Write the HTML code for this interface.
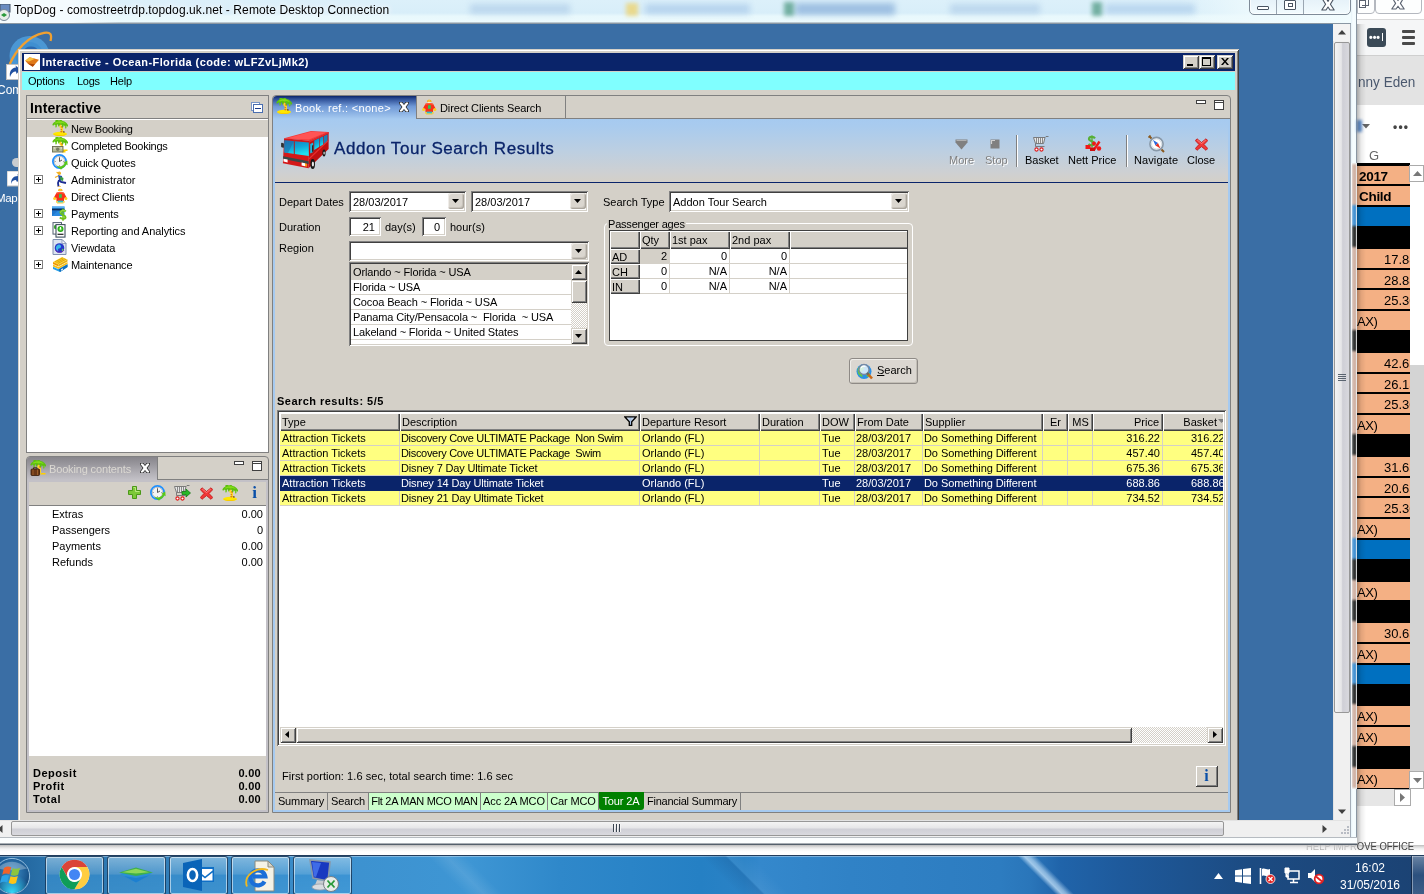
<!DOCTYPE html>
<html lang="en"><head><meta charset="utf-8"><title>TopDog - Remote Desktop Connection</title>
<style>
html,body{margin:0;padding:0;background:#3a6ea5;}
body{width:1424px;height:894px;overflow:hidden;font-family:"Liberation Sans",sans-serif;font-size:11px;color:#000;}
#root{position:relative;width:1424px;height:894px;overflow:hidden;will-change:transform;}
#root div,#root span,#root svg{position:absolute;box-sizing:border-box;}
.t{white-space:pre;line-height:13px;height:13px;}
.r{text-align:right;}
.b{font-weight:bold;}
.face{background:#d4d0c8;}
.sunk{box-shadow:inset 1px 1px #808080,inset -1px -1px #fff,inset 2px 2px #404040,inset -2px -2px #d4d0c8;}
.rais{box-shadow:inset 1px 1px #fff,inset -1px -1px #404040,inset -2px -2px #808080;background:#d4d0c8;}
.rais2{box-shadow:inset 1px 1px #d4d0c8,inset -1px -1px #404040,inset 2px 2px #fff,inset -2px -2px #808080;background:#d4d0c8;}
.hdr{background:#d4d0c8;box-shadow:inset 1px 1px #fff,inset -1px -1px #404040,inset -2px -2px #808080;}
.w{color:#fff;}
</style></head><body><div id="root">
<!-- RDP title bar -->
<div style="left:0px;top:0px;width:1357px;height:24px;background:linear-gradient(to bottom,#dcf0fa 0,#d8eef9 13px,#e8f8fc 16px,#ecfafd 22px,#8a97a3 23px);"></div>
<div style="left:0px;top:0px;width:120px;height:23px;background:linear-gradient(to right,#f4fbfe,#f4fbfe 60%,rgba(244,251,254,0));"></div>
<div style="left:1180px;top:0px;width:177px;height:23px;background:linear-gradient(to right,rgba(240,251,254,0),#eefafd 45%,#f2fcfe);"></div>
<div style="left:470px;top:4px;width:100px;height:10px;background:#a9c8e6;filter:blur(3px);opacity:.6"></div>
<div style="left:645px;top:4px;width:105px;height:10px;background:#a4c6e8;filter:blur(3px);opacity:.65"></div>
<div style="left:795px;top:3px;width:100px;height:12px;background:#8fb4dc;filter:blur(3px);opacity:.8"></div>
<div style="left:950px;top:4px;width:90px;height:10px;background:#a9c8e6;filter:blur(3px);opacity:.6"></div>
<div style="left:1105px;top:4px;width:90px;height:10px;background:#a4c6e8;filter:blur(3px);opacity:.6"></div>
<div style="left:626px;top:3px;width:12px;height:13px;background:#f0d060;filter:blur(2px);opacity:.7"></div>
<div style="left:784px;top:2px;width:10px;height:14px;background:#5aa08c;filter:blur(2px);opacity:.8"></div>
<div style="left:1092px;top:2px;width:10px;height:14px;background:#5aa08c;filter:blur(2px);opacity:.8"></div>
<span class="t" style="left:14px;top:2px;font-size:12px;line-height:16px;height:16px;letter-spacing:0.1px;text-shadow:0 0 6px #fff,0 0 6px #fff;">TopDog - comostreetrdp.topdog.uk.net - Remote Desktop Connection</span>
<svg style="left:-3px;top:4px" width="16" height="18" viewBox="0 0 16 18"><rect x="3" y="0" width="10" height="8" fill="#6a8cc0" stroke="#456" stroke-width="1"/><circle cx="7" cy="11" r="5.5" fill="#e8eee8" stroke="#789" stroke-width="1"/><path d="M4 11l3-2v4zM10 11l-3-2v4z" fill="#2a9a3a"/></svg>
<div style="left:1249px;top:-4px;width:102px;height:19px;border:1px solid #7f8b98;border-radius:0 0 5px 5px;background:linear-gradient(to bottom,#e4f0f8,#f2fbfe);box-shadow:inset 0 0 0 1px rgba(255,255,255,.7);"></div>
<div style="left:1276px;top:0px;width:1px;height:14px;background:#9aa6b2"></div>
<div style="left:1303px;top:0px;width:1px;height:14px;background:#9aa6b2"></div>
<div style="left:1257px;top:6px;width:12px;height:4px;border:1px solid #4a5462;background:#fff;border-radius:1px"></div>
<div style="left:1284px;top:0px;width:12px;height:10px;border:1px solid #4a5462;background:#fff;border-radius:1px"></div>
<div style="left:1288px;top:3px;width:5px;height:4px;border:1px solid #4a5462;"></div>
<svg style="left:1321px;top:0px" width="14" height="11" viewBox="0 0 14 11"><path d="M.8 -2 L4.600 4.200 .8 10 h4.200 L7 7 9 10 h4.200 L9.400 4.200 13.200 -2 h-4.200 L7 1.400 5 -2z" fill="#fff" stroke="#4a5462" stroke-width="1.100" stroke-linejoin="round"/></svg>
<!-- RDP scrollbars -->
<div style="left:1333px;top:24px;width:18px;height:796px;background:#f0f0f0;border-left:1px solid #e3e3e3"></div>
<div style="left:1333px;top:24px;width:18px;height:17px;background:#f3f3f3"></div>
<svg style="left:1338px;top:29px" width="8" height="6" viewBox="0 0 8 6"><path d="M0 5.5 L4 1 8 5.5z" fill="#404040"/></svg>
<div style="left:1334px;top:42px;width:16px;height:671px;border:1px solid #979797;border-radius:2px;background:linear-gradient(to right,#f4f4f4,#e6e6e8 45%,#cfcfd6 55%,#d9d9de);"></div>
<svg style="left:1338px;top:373px" width="8" height="9" viewBox="0 0 8 9"><path d="M0 1.5h8M0 3.5h8M0 5.5h8M0 7.5h8" stroke="#5a6470" stroke-width="1"/></svg>
<svg style="left:1338px;top:809px" width="8" height="6" viewBox="0 0 8 6"><path d="M0 .5 L4 5 8 .5z" fill="#404040"/></svg>
<div style="left:0px;top:820px;width:1351px;height:17px;background:#f0f0f0;border-top:1px solid #e3e3e3"></div>
<div style="left:11px;top:821px;width:1213px;height:15px;border:1px solid #979797;border-radius:2px;background:linear-gradient(to bottom,#f4f4f4,#e6e6e8 45%,#cfcfd6 55%,#d9d9de);"></div>
<svg style="left:613px;top:824px" width="9" height="8" viewBox="0 0 9 8"><path d="M.5 0v8M3.5 0v8M6.500 0v8" stroke="#3a4450" stroke-width="1"/><path d="M1.500 0v8M4.500 0v8M7.500 0v8" stroke="#f4f4f4" stroke-width="1"/></svg>
<svg style="left:-3px;top:825px" width="6" height="8" viewBox="0 0 6 8"><path d="M5.5 0 L1 4 5.5 8z" fill="#404040"/></svg>
<svg style="left:1322px;top:825px" width="6" height="8" viewBox="0 0 6 8"><path d="M.5 0 L5 4 .5 8z" fill="#404040"/></svg>
<svg style="left:1338px;top:824px" width="12" height="12" viewBox="0 0 12 12"><path d="M9 2h2v2h-2zM6 5h2v2h-2zM9 5h2v2h-2zM3 8h2v2h-2zM6 8h2v2h-2zM9 8h2v2h-2z" fill="#b8bcc4"/></svg>
<div style="left:1350px;top:24px;width:1px;height:814px;background:#a3adb8"></div>
<div style="left:1351px;top:0px;width:6px;height:845px;background:linear-gradient(to right,#e6f2f8,#f6fdff 40%,#f2fbfe);border-right:1px solid #8a96a2"></div>
<div style="left:0px;top:837px;width:1357px;height:8px;background:linear-gradient(to bottom,#727a84 0,#fafdfe 1px,#fcfefe 6px,#55606c 7px);"></div>
<!-- right window -->
<div style="left:1357px;top:0px;width:67px;height:845px;background:#fff"></div>
<div style="left:1357px;top:-4px;width:18px;height:18px;border:1px solid #b4b8bf;border-radius:0 0 4px 0;background:#fdfefe"></div>
<div style="left:1375px;top:-4px;width:47px;height:18px;border:1px solid #b4b8bf;border-radius:0 0 4px 4px;background:#fdfefe"></div>
<div style="left:1359px;top:0px;width:7px;height:8px;border:1px solid #5a6270;background:#fff"></div>
<div style="left:1362px;top:-2px;width:7px;height:8px;border:1px solid #5a6270;border-left:none"></div>
<svg style="left:1391px;top:0px" width="14" height="10" viewBox="0 0 14 10"><path d="M.8 -3 L4.600 3.400 .8 9 h4.200 L7 6.200 9 9 h4.200 L9.400 3.400 13.200 -3 h-4.200 L7 .6 5 -3z" fill="#fff" stroke="#5a6270" stroke-width="1.100" stroke-linejoin="round"/></svg>
<div style="left:1357px;top:19px;width:67px;height:1px;background:#d9d9d9"></div>
<div style="left:1357px;top:20px;width:67px;height:36px;background:#f5f6f7"></div>
<div style="left:1367px;top:28px;width:19px;height:19px;background:#3b4a57;border-radius:3px"></div>
<span class="t" style="left:1369px;top:30px;color:#fff;font-size:10.5px;line-height:14px;height:14px;letter-spacing:0px;font-weight:bold">•••</span>
<div style="left:1382px;top:33px;width:1px;height:8px;background:#fff"></div>
<div style="left:1402px;top:30px;width:13px;height:3px;background:#4a4a4a;border-radius:1px"></div>
<div style="left:1402px;top:36px;width:13px;height:3px;background:#4a4a4a;border-radius:1px"></div>
<div style="left:1402px;top:42px;width:13px;height:3px;background:#4a4a4a;border-radius:1px"></div>
<div style="left:1357px;top:55px;width:67px;height:1px;background:#cfcfcf"></div>
<div style="left:1357px;top:56px;width:67px;height:49px;background:#e3e3e3"></div>
<span class="t" style="left:1358px;top:72px;font-size:15.5px;line-height:20px;height:20px;color:#4a586e;transform:scaleX(0.875);transform-origin:0 0">nny Eden</span>
<svg style="left:1362px;top:124px" width="8" height="5" viewBox="0 0 8 5"><path d="M0 0h8L4 4.5z" fill="#666"/></svg>
<div style="left:1357px;top:120px;width:5px;height:12px;background:#3a78c8;filter:blur(1.5px);opacity:.8"></div>
<span class="t" style="left:1393px;top:119px;font-size:12px;line-height:16px;height:16px;color:#444;letter-spacing:1.2px;font-weight:bold">•••</span>
<span class="t" style="left:1369px;top:148px;font-size:13px;line-height:15px;height:15px;color:#666">G</span>
<div style="left:1357px;top:163px;width:53px;height:626px;background:#000"></div>
<div style="left:1357px;top:166px;width:53px;height:18px;background:#f4b084;overflow:hidden"><span class="t" style="left:2px;top:3px;font-size:13.5px;font-weight:bold;line-height:16px;height:16px;letter-spacing:-0.3px">2017</span></div>
<div style="left:1357px;top:186px;width:53px;height:19px;background:#f4b084;overflow:hidden"><span class="t" style="left:2px;top:3px;font-size:13.5px;font-weight:bold;line-height:16px;height:16px;letter-spacing:-0.3px">Child</span></div>
<div style="left:1357px;top:207px;width:53px;height:19px;background:#0070c0;overflow:hidden"></div>
<div style="left:1357px;top:228px;width:53px;height:19px;background:#000;overflow:hidden"></div>
<div style="left:1357px;top:249px;width:53px;height:19px;background:#f4b084;overflow:hidden"><span class="t" style="left:27px;top:3px;font-size:13px;line-height:16px;height:16px">17.88</span></div>
<div style="left:1357px;top:270px;width:53px;height:18px;background:#f4b084;overflow:hidden"><span class="t" style="left:27px;top:3px;font-size:13px;line-height:16px;height:16px">28.88</span></div>
<div style="left:1357px;top:290px;width:53px;height:19px;background:#f4b084;overflow:hidden"><span class="t" style="left:27px;top:3px;font-size:13px;line-height:16px;height:16px">25.30</span></div>
<div style="left:1357px;top:311px;width:53px;height:19px;background:#f4b084;overflow:hidden"><span class="t" style="left:0px;top:3px;font-size:13px;line-height:16px;height:16px;letter-spacing:-0.4px">AX)</span></div>
<div style="left:1357px;top:332px;width:53px;height:19px;background:#000;overflow:hidden"></div>
<div style="left:1357px;top:353px;width:53px;height:19px;background:#f4b084;overflow:hidden"><span class="t" style="left:27px;top:3px;font-size:13px;line-height:16px;height:16px">42.63</span></div>
<div style="left:1357px;top:374px;width:53px;height:18px;background:#f4b084;overflow:hidden"><span class="t" style="left:27px;top:3px;font-size:13px;line-height:16px;height:16px">26.13</span></div>
<div style="left:1357px;top:394px;width:53px;height:19px;background:#f4b084;overflow:hidden"><span class="t" style="left:27px;top:3px;font-size:13px;line-height:16px;height:16px">25.30</span></div>
<div style="left:1357px;top:415px;width:53px;height:19px;background:#f4b084;overflow:hidden"><span class="t" style="left:0px;top:3px;font-size:13px;line-height:16px;height:16px;letter-spacing:-0.4px">AX)</span></div>
<div style="left:1357px;top:436px;width:53px;height:19px;background:#000;overflow:hidden"></div>
<div style="left:1357px;top:457px;width:53px;height:19px;background:#f4b084;overflow:hidden"><span class="t" style="left:27px;top:3px;font-size:13px;line-height:16px;height:16px">31.63</span></div>
<div style="left:1357px;top:478px;width:53px;height:18px;background:#f4b084;overflow:hidden"><span class="t" style="left:27px;top:3px;font-size:13px;line-height:16px;height:16px">20.63</span></div>
<div style="left:1357px;top:498px;width:53px;height:19px;background:#f4b084;overflow:hidden"><span class="t" style="left:27px;top:3px;font-size:13px;line-height:16px;height:16px">25.30</span></div>
<div style="left:1357px;top:519px;width:53px;height:19px;background:#f4b084;overflow:hidden"><span class="t" style="left:0px;top:3px;font-size:13px;line-height:16px;height:16px;letter-spacing:-0.4px">AX)</span></div>
<div style="left:1357px;top:540px;width:53px;height:19px;background:#0070c0;overflow:hidden"></div>
<div style="left:1357px;top:561px;width:53px;height:19px;background:#000;overflow:hidden"></div>
<div style="left:1357px;top:582px;width:53px;height:18px;background:#f4b084;overflow:hidden"><span class="t" style="left:0px;top:3px;font-size:13px;line-height:16px;height:16px;letter-spacing:-0.4px">AX)</span></div>
<div style="left:1357px;top:602px;width:53px;height:19px;background:#000;overflow:hidden"></div>
<div style="left:1357px;top:623px;width:53px;height:19px;background:#f4b084;overflow:hidden"><span class="t" style="left:27px;top:3px;font-size:13px;line-height:16px;height:16px">30.63</span></div>
<div style="left:1357px;top:644px;width:53px;height:19px;background:#f4b084;overflow:hidden"><span class="t" style="left:0px;top:3px;font-size:13px;line-height:16px;height:16px;letter-spacing:-0.4px">AX)</span></div>
<div style="left:1357px;top:665px;width:53px;height:19px;background:#0070c0;overflow:hidden"></div>
<div style="left:1357px;top:686px;width:53px;height:18px;background:#000;overflow:hidden"></div>
<div style="left:1357px;top:706px;width:53px;height:19px;background:#f4b084;overflow:hidden"><span class="t" style="left:0px;top:3px;font-size:13px;line-height:16px;height:16px;letter-spacing:-0.4px">AX)</span></div>
<div style="left:1357px;top:727px;width:53px;height:19px;background:#f4b084;overflow:hidden"><span class="t" style="left:0px;top:3px;font-size:13px;line-height:16px;height:16px;letter-spacing:-0.4px">AX)</span></div>
<div style="left:1357px;top:748px;width:53px;height:19px;background:#000;overflow:hidden"></div>
<div style="left:1357px;top:769px;width:53px;height:19px;background:#f4b084;overflow:hidden"><span class="t" style="left:0px;top:3px;font-size:13px;line-height:16px;height:16px;letter-spacing:-0.4px">AX)</span></div>
<div style="left:1351px;top:163px;width:6px;height:626px;overflow:hidden"><div style="left:1px;top:0;width:4px;height:626px;filter:blur(1.200px);opacity:.8"><div style="left:0;top:1px;width:5px;height:20px;background:#c8a090"></div><div style="left:0;top:21px;width:5px;height:21px;background:#c8a090"></div><div style="left:0;top:42px;width:5px;height:21px;background:#1a78c8"></div><div style="left:0;top:63px;width:5px;height:21px;background:#000"></div><div style="left:0;top:84px;width:5px;height:21px;background:#c8a090"></div><div style="left:0;top:105px;width:5px;height:20px;background:#c8a090"></div><div style="left:0;top:125px;width:5px;height:21px;background:#c8a090"></div><div style="left:0;top:146px;width:5px;height:21px;background:#c8a090"></div><div style="left:0;top:167px;width:5px;height:21px;background:#000"></div><div style="left:0;top:188px;width:5px;height:21px;background:#c8a090"></div><div style="left:0;top:209px;width:5px;height:20px;background:#c8a090"></div><div style="left:0;top:229px;width:5px;height:21px;background:#c8a090"></div><div style="left:0;top:250px;width:5px;height:21px;background:#c8a090"></div><div style="left:0;top:271px;width:5px;height:21px;background:#000"></div><div style="left:0;top:292px;width:5px;height:21px;background:#c8a090"></div><div style="left:0;top:313px;width:5px;height:20px;background:#c8a090"></div><div style="left:0;top:333px;width:5px;height:21px;background:#c8a090"></div><div style="left:0;top:354px;width:5px;height:21px;background:#c8a090"></div><div style="left:0;top:375px;width:5px;height:21px;background:#1a78c8"></div><div style="left:0;top:396px;width:5px;height:21px;background:#000"></div><div style="left:0;top:417px;width:5px;height:20px;background:#c8a090"></div><div style="left:0;top:437px;width:5px;height:21px;background:#000"></div><div style="left:0;top:458px;width:5px;height:21px;background:#c8a090"></div><div style="left:0;top:479px;width:5px;height:21px;background:#c8a090"></div><div style="left:0;top:500px;width:5px;height:21px;background:#1a78c8"></div><div style="left:0;top:521px;width:5px;height:20px;background:#000"></div><div style="left:0;top:541px;width:5px;height:21px;background:#c8a090"></div><div style="left:0;top:562px;width:5px;height:21px;background:#c8a090"></div><div style="left:0;top:583px;width:5px;height:21px;background:#000"></div><div style="left:0;top:604px;width:5px;height:21px;background:#c8a090"></div></div></div>
<div style="left:1351px;top:163px;width:1px;height:626px;background:rgba(255,255,255,.8)"></div>
<div style="left:1356px;top:163px;width:1px;height:626px;background:rgba(255,255,255,.75)"></div>
<div style="left:1410px;top:165px;width:14px;height:624px;background:#d4d4d4"></div>
<div style="left:1410px;top:165px;width:14px;height:200px;background:#fff"></div>
<div style="left:1409px;top:165px;width:15px;height:17px;background:#fff;border:1px solid #ababab"></div>
<svg style="left:1413px;top:171px" width="9" height="5" viewBox="0 0 9 5"><path d="M0 5L4.5 0 9 5z" fill="#777"/></svg>
<div style="left:1409px;top:771px;width:15px;height:18px;background:#fff;border:1px solid #ababab"></div>
<svg style="left:1413px;top:778px" width="9" height="5" viewBox="0 0 9 5"><path d="M0 0L4.5 5 9 0z" fill="#777"/></svg>
<div style="left:1357px;top:789px;width:67px;height:17px;background:#e6e6e6"></div>
<div style="left:1394px;top:789px;width:17px;height:17px;background:#fff;border:1px solid #ababab"></div>
<svg style="left:1400px;top:793px" width="5" height="9" viewBox="0 0 5 9"><path d="M0 0L5 4.5 0 9z" fill="#777"/></svg>
<div style="left:1411px;top:789px;width:13px;height:17px;background:#fff"></div>
<div style="left:1357px;top:24px;width:9px;height:821px;background:linear-gradient(to right,rgba(0,0,0,.28),rgba(0,0,0,.08) 45%,rgba(0,0,0,0));"></div>
<!-- taskbar -->
<div style="left:0px;top:845px;width:1424px;height:11px;background:linear-gradient(to bottom,#bdbdbd 0,#dedede 2px,#f4f4f4 4px,#ffffff 7px,#fefefe 100%);"></div>
<span class="t" style="left:1306px;top:839px;font-size:11px;line-height:14px;height:14px;color:#444;transform:scaleX(0.86);transform-origin:0 0;clip-path:polygon(0 6px,59px 6px,59px 0,150px 0,150px 14px,0 14px)">HELP IMPROVE OFFICE</span>
<div style="left:1200px;top:845px;width:157px;height:10px;background:linear-gradient(to bottom,rgba(200,200,200,.9) 0,rgba(236,236,236,.75) 2px,rgba(255,255,255,.55) 6px,rgba(255,255,255,.2) 100%);"></div>
<div style="left:0px;top:856px;width:1424px;height:38px;background:linear-gradient(to right,#1f5f97 0,#2a73ac 50px,#3d92d0 360px,#3e96d4 470px,#2f88ca 560px,#2580c4 700px,#2a82c6 744px,#3488cc 760px,#3082c6 850px,#2d7cc0 1000px,#2a76ba 1030px,#2064aa 1060px,#1e5a9c 1120px,#1c4b82 1250px,#1b4273 1424px);"></div>
<div style="left:0px;top:856px;width:1424px;height:1px;background:rgba(255,255,255,.35)"></div>
<div style="left:0px;top:855px;width:1424px;height:1px;background:#223c5c"></div>
<div style="left:1000px;top:856px;width:90px;height:38px;background:linear-gradient(45deg,rgba(255,255,255,0) 43%,rgba(200,228,250,.75) 48.500%,rgba(200,228,250,.6) 52%,rgba(255,255,255,0) 58%);"></div>
<div style="left:420px;top:856px;width:90px;height:38px;background:linear-gradient(45deg,rgba(255,255,255,0) 35%,rgba(255,255,255,.1) 50%,rgba(255,255,255,0) 65%);"></div>
<div style="left:700px;top:856px;width:90px;height:38px;background:linear-gradient(45deg,rgba(0,0,0,0) 30%,rgba(0,30,80,.12) 49%,rgba(255,255,255,.06) 51%,rgba(255,255,255,0) 70%);"></div>
<svg style="left:-7px;top:857px" width="40" height="37" viewBox="0 0 42 39">
<defs><radialGradient id="orb" cx="50%" cy="40%" r="60%"><stop offset="0" stop-color="#3f8fc9"/><stop offset=".7" stop-color="#1d5c94"/><stop offset="1" stop-color="#0f3f70"/></radialGradient>
<radialGradient id="orbg" cx="50%" cy="100%" r="55%"><stop offset="0" stop-color="#35e0ff"/><stop offset="1" stop-color="#35e0ff" stop-opacity="0"/></radialGradient></defs>
<circle cx="20" cy="20" r="18.5" fill="url(#orb)" stroke="#9cc6e6" stroke-width="1"/>
<circle cx="20" cy="20" r="18" fill="url(#orbg)"/>
<path d="M4 12 Q20 -2 36 12 Q20 16 4 12z" fill="#fff" opacity=".28"/>
<path d="M11.5 11.5c2.5-1.6 5-1.8 7.6-.6l-1.9 7.2c-2.6-1.1-5-1-7.5.5z" fill="#f1632a"/>
<path d="M20.6 11.6c2.7 1.3 5.2 1.2 7.8-.2l-2 7.2c-2.600 1.5-5 1.500-7.7.3z" fill="#8cc53f"/>
<path d="M9.200 20.200c2.500-1.500 5-1.700 7.600-.6l-1.900 7.200c-2.600-1.100-5-1-7.600.6z" fill="#2ba3e8"/>
<path d="M18.400 20.300c2.700 1.200 5.200 1.200 7.700-.3l-1.900 7.300c-2.600 1.400-5.100 1.400-7.700.2z" fill="#fdc417"/>
</svg>
<div style="left:45px;top:856px;width:59px;height:39px;border:1px solid rgba(16,40,70,.75);border-radius:3px;background:linear-gradient(to bottom,rgba(190,225,245,.55) 0,rgba(120,185,230,.45) 45%,rgba(60,150,215,.55) 50%,rgba(70,160,220,.5) 100%);box-shadow:inset 0 0 0 1px rgba(255,255,255,.55);"></div>
<div style="left:107px;top:856px;width:59px;height:39px;border:1px solid rgba(16,40,70,.75);border-radius:3px;background:linear-gradient(to bottom,rgba(190,225,245,.55) 0,rgba(120,185,230,.45) 45%,rgba(60,150,215,.55) 50%,rgba(70,160,220,.5) 100%);box-shadow:inset 0 0 0 1px rgba(255,255,255,.55);"></div>
<div style="left:169px;top:856px;width:59px;height:39px;border:1px solid rgba(16,40,70,.75);border-radius:3px;background:linear-gradient(to bottom,rgba(190,225,245,.55) 0,rgba(120,185,230,.45) 45%,rgba(60,150,215,.55) 50%,rgba(70,160,220,.5) 100%);box-shadow:inset 0 0 0 1px rgba(255,255,255,.55);"></div>
<div style="left:231px;top:856px;width:59px;height:39px;border:1px solid rgba(16,40,70,.75);border-radius:3px;background:linear-gradient(to bottom,rgba(190,225,245,.55) 0,rgba(120,185,230,.45) 45%,rgba(60,150,215,.55) 50%,rgba(70,160,220,.5) 100%);box-shadow:inset 0 0 0 1px rgba(255,255,255,.55);"></div>
<div style="left:293px;top:856px;width:59px;height:39px;border:1px solid rgba(16,40,70,.75);border-radius:3px;background:linear-gradient(to bottom,rgba(190,225,245,.55) 0,rgba(120,185,230,.45) 45%,rgba(60,150,215,.55) 50%,rgba(70,160,220,.5) 100%);box-shadow:inset 0 0 0 1px rgba(255,255,255,.55);"></div>
<svg style="left:59px;top:859px" width="31" height="31" viewBox="0 0 48 48">
<circle cx="24" cy="24" r="23" fill="#fff"/>
<path d="M4.080 12.500A23 23 0 0 1 43.920 12.500L24 12.500A11.500 11.500 0 0 0 14.040 29.750z" fill="#db4437"/>
<path d="M43.920 12.500A23 23 0 0 1 24 47L33.960 29.750A11.500 11.500 0 0 0 24 12.500z" fill="#ffcd40"/>
<path d="M24 47A23 23 0 0 1 4.080 12.500L14.040 29.750A11.500 11.500 0 0 0 33.960 29.750z" fill="#0f9d58"/>
<circle cx="24" cy="24" r="10.800" fill="#fff"/><circle cx="24" cy="24" r="8.600" fill="#4285f4"/></svg>
<svg style="left:118px;top:865px" width="36" height="20" viewBox="0 0 36 20">
<path d="M2 9 L17 4 L34 8.500 L18 17.500z" fill="#2b8fd6"/><path d="M1 7.500 L18 2.500 L35 7.500 L18 11z" fill="#3fb04a"/><path d="M4 7.300 L18 3.800 L31 7.300 L18 8.600z" fill="#8fd85a"/><path d="M6 11 L18 13 L31 10.500 L18 17.500z" fill="#1d7fd0"/></svg>
<svg style="left:183px;top:859px" width="32" height="32" viewBox="0 0 32 32">
<rect x="13" y="8" width="18" height="15" fill="#0f6fc6"/><path d="M14.500 10h15v1.500l-7.500 6-7.500-6zM14.500 13.500l7.500 6 7.500-6v8h-15z" fill="#fff"/>
<path d="M0 4 L19 0 V32 L0 28z" fill="#0a64b8"/><ellipse cx="9.500" cy="16" rx="4.600" ry="6" fill="none" stroke="#fff" stroke-width="2.600"/></svg>
<svg style="left:244px;top:860px" width="34" height="32" viewBox="0 0 34 32">
<path d="M11 1h13l6 6v24H11z" fill="#f4f2e6" stroke="#8a8a80" stroke-width="1"/><path d="M24 1v6h6z" fill="#d8d6c8" stroke="#8a8a80" stroke-width="1"/>
<path d="M20.500 21.500 A7.500 7.500 0 1 1 21.300 16.500 H9" fill="none" stroke="#1a6fd8" stroke-width="4.200"/>
<path d="M3 26.500 C-1 16 12 6 24 10" fill="none" stroke="#f0b820" stroke-width="1.800"/></svg>
<svg style="left:308px;top:859px" width="32" height="34" viewBox="0 0 32 34">
<path d="M2 1 L22 3 L20 22 L5 19z" fill="#1838c0" stroke="#8898a8" stroke-width="1.600"/><path d="M4 3 L13 4 L8 18 L6 17.500z" fill="#4a78f0" opacity=".8"/>
<path d="M9 21 L16 22 L17 27 L7 26z" fill="#c8ccd0"/><ellipse cx="12" cy="28" rx="8" ry="3" fill="#d8dce0" stroke="#98a0a8" stroke-width=".8"/>
<circle cx="23" cy="25" r="7.500" fill="#e8ece8" stroke="#788088" stroke-width="1"/><path d="M19.500 21.500 L22.500 25 L19.500 28.500M26.500 21.500 L23.500 25 L26.500 28.500" fill="none" stroke="#2a9a3a" stroke-width="1.800"/></svg>
<svg style="left:1214px;top:873px" width="9" height="6" viewBox="0 0 9 6"><path d="M0 6 L4.500 0 9 6z" fill="#fff"/></svg>
<svg style="left:1235px;top:868px" width="16" height="16" viewBox="0 0 16 16"><path d="M0 2.200 L7 1.200V7.500H0zM8 1.100 L16 0V7.500H8zM0 8.500H7V14.800L0 13.800zM8 8.500H16V16L8 14.900z" fill="#fff"/></svg>
<svg style="left:1259px;top:867px" width="18" height="18" viewBox="0 0 18 18"><path d="M1.500 1v16" stroke="#fff" stroke-width="1.600"/><path d="M3 2 C6 0.500 8 3.500 11 2 V9 C8 10.500 6 7.500 3 9z" fill="#fff"/><circle cx="11.500" cy="12" r="4.500" fill="#e02020" stroke="#fff" stroke-width=".8"/><path d="M9.500 10l4 4M13.500 10l-4 4" stroke="#fff" stroke-width="1.400"/></svg>
<svg style="left:1284px;top:867px" width="18" height="18" viewBox="0 0 18 18"><rect x="4" y="4" width="11" height="8" fill="none" stroke="#fff" stroke-width="1.500"/><path d="M6 15.500h8M9.500 12v3" stroke="#fff" stroke-width="1.500"/><path d="M1 1h4v5H1zM2 6v4h3" fill="#fff" stroke="#fff" stroke-width="1"/></svg>
<svg style="left:1307px;top:867px" width="18" height="18" viewBox="0 0 18 18"><path d="M1 6h3l4-4v13l-4-4H1z" fill="#fff"/><circle cx="12" cy="12" r="4.300" fill="#fff" stroke="#e02020" stroke-width="1.800"/><path d="M9 9.500l6 5" stroke="#e02020" stroke-width="1.800"/></svg>
<span class="t" style="left:1320px;top:860px;font-size:12px;line-height:16px;height:16px;color:#fff;width:100px;text-align:center">16:02</span>
<span class="t" style="left:1320px;top:877px;font-size:12px;line-height:16px;height:16px;color:#fff;width:100px;text-align:center">31/05/2016</span>
<div style="left:1411px;top:856px;width:13px;height:38px;border-left:1px solid rgba(10,30,60,.8);background:linear-gradient(to bottom,rgba(255,255,255,.35),rgba(255,255,255,.08) 50%,rgba(255,255,255,.15));box-shadow:inset 1px 0 rgba(255,255,255,.4)"></div>
<!-- desktop icons behind -->
<svg style="left:0px;top:24px" width="60" height="80" viewBox="0 0 60 80">
<circle cx="29.500" cy="32" r="20" fill="#4f9fdc" opacity=".85"/><circle cx="29.500" cy="32" r="14" fill="#3f8fd0" opacity=".9"/><ellipse cx="31" cy="27" rx="7" ry="4.500" fill="#2a68b0"/>
<path d="M9.800 40 C16 26 28 12 44 8.800 C51 7.500 52 11 50.500 17" fill="none" stroke="#f0a030" stroke-width="2.300"/>
<rect x="6.500" y="40.500" width="13" height="15" fill="#fff" stroke="#c0c0c0" stroke-width="1"/><path d="M10 53c-1-5 1-9 6-9.500l-.5-2 5 4-4 4.500-.5-2.500c-3 0-5 2-6 5.500z" fill="#2050a0"/></svg>
<span class="t" style="left:-3px;top:83px;font-size:12px;line-height:15px;height:15px;color:#fff">Com</span>
<div style="left:12px;top:158px;width:6px;height:9px;background:#c8ccd0;border-radius:5px 0 0 5px"></div>
<svg style="left:7px;top:171px" width="15" height="16" viewBox="0 0 15 16"><rect x="0" y="0" width="15" height="15" fill="#fff" stroke="#bbb"/><path d="M4 13c0-5 2-8 7-8l-1-2 5 4-5 4-1-2c-3 0-4 1-5 4z" fill="#2050a0"/></svg>
<span class="t" style="left:-4px;top:191px;letter-spacing:-0.4px;font-size:11.5px;line-height:15px;height:15px;color:#fff">Map</span>
<!-- app window -->
<div style="left:18px;top:49px;width:1221px;height:771px;background:#d4d0c8;box-shadow:inset 1px 1px #d4d0c8,inset -1px 0 #404040,inset 2px 2px #fff,inset -2px 0 #808080;"></div>
<div style="left:22px;top:53px;width:1213px;height:18px;background:#0a246a"></div>
<div style="left:24px;top:54px;width:16px;height:16px;background:#fff"></div>
<svg style="left:24px;top:56px" width="16" height="13" viewBox="0 0 16 13"><path d="M1.200 4.700 L5.500 1.300 L15 3.800 L8.700 10.800 L3.700 7.400z" fill="#e07818"/><path d="M1.200 4.700 L5.500 1.300 L11 2.800 L5 5.500z" fill="#f8c040"/><path d="M3.700 7.400 L8.700 10.800 L11 8.200z" fill="#b04808"/></svg>
<span class="t" style="left:42px;top:55px;font-weight:bold;color:#fff;font-size:11px;line-height:14px;height:14px;letter-spacing:0.42px">Interactive - Ocean-Florida (code: wLFZvLjMk2)</span>
<div class="rais2" style="left:1183px;top:55px;width:16px;height:14px;"></div>
<div class="rais2" style="left:1199px;top:55px;width:16px;height:14px;"></div>
<div class="rais2" style="left:1217px;top:55px;width:16px;height:14px;"></div>
<div style="left:1187px;top:64px;width:6px;height:2px;background:#000"></div>
<div style="left:1202px;top:57px;width:9px;height:9px;border:1px solid #000;border-top:2px solid #000"></div>
<svg style="left:1221px;top:58px" width="8" height="7" viewBox="0 0 8 7"><path d="M0 0h2l2 2.500L6 0h2L5 3.500 8 7H6L4 4.500 2 7H0l3-3.500z" fill="#000"/></svg>
<div style="left:22px;top:72px;width:1213px;height:18px;background:#80ffff"></div>
<div style="left:22px;top:71px;width:1213px;height:1px;background:#d4d0c8"></div>
<span class="t" style="left:28px;top:75px;letter-spacing:-0.2px">Options</span>
<span class="t" style="left:77px;top:75px;letter-spacing:-0.3px">Logs</span>
<span class="t" style="left:110px;top:75px;letter-spacing:-0.2px">Help</span>
<!-- interactive panel -->
<div style="left:26px;top:95px;width:243px;height:358px;border:1px solid #808080;background:#fff"></div>
<div style="left:27px;top:96px;width:241px;height:22px;background:#d4d0c8"></div>
<div style="left:27px;top:118px;width:241px;height:1px;background:#808080"></div>
<div style="left:27px;top:119px;width:241px;height:1px;background:#fff"></div>
<span class="t" style="left:30px;top:100px;font-weight:bold;font-size:14px;line-height:17px;height:17px;letter-spacing:0.1px">Interactive</span>
<div style="left:251px;top:102px;width:9px;height:9px;border:1px solid #7a96c8;background:#fff"></div>
<div style="left:253px;top:104px;width:10px;height:9px;border:1px solid #4a6eb0;background:#fff"></div>
<div style="left:255px;top:108px;width:6px;height:1px;background:#1a3a8a"></div>
<div style="left:27px;top:120px;width:241px;height:17px;background:#d4d0c8"></div>
<span class="t" style="left:71px;top:123px;letter-spacing:-0.3px">New Booking</span>
<span class="t" style="left:71px;top:140px;letter-spacing:-0.28px">Completed Bookings</span>
<span class="t" style="left:71px;top:157px;letter-spacing:-0.18px">Quick Quotes</span>
<span class="t" style="left:71px;top:174px;letter-spacing:-0.03px">Administrator</span>
<div style="left:34px;top:175px;width:9px;height:9px;border:1px solid #808080;background:#fff"></div>
<div style="left:36px;top:179px;width:5px;height:1px;background:#000"></div>
<div style="left:38px;top:177px;width:1px;height:5px;background:#000"></div>
<span class="t" style="left:71px;top:191px;letter-spacing:-0.14px">Direct Clients</span>
<span class="t" style="left:71px;top:208px;letter-spacing:-0.18px">Payments</span>
<div style="left:34px;top:209px;width:9px;height:9px;border:1px solid #808080;background:#fff"></div>
<div style="left:36px;top:213px;width:5px;height:1px;background:#000"></div>
<div style="left:38px;top:211px;width:1px;height:5px;background:#000"></div>
<span class="t" style="left:71px;top:225px;letter-spacing:-0.05px">Reporting and Analytics</span>
<div style="left:34px;top:226px;width:9px;height:9px;border:1px solid #808080;background:#fff"></div>
<div style="left:36px;top:230px;width:5px;height:1px;background:#000"></div>
<div style="left:38px;top:228px;width:1px;height:5px;background:#000"></div>
<span class="t" style="left:71px;top:242px;letter-spacing:-0.1px">Viewdata</span>
<span class="t" style="left:71px;top:259px;letter-spacing:-0.14px">Maintenance</span>
<div style="left:34px;top:260px;width:9px;height:9px;border:1px solid #808080;background:#fff"></div>
<div style="left:36px;top:264px;width:5px;height:1px;background:#000"></div>
<div style="left:38px;top:262px;width:1px;height:5px;background:#000"></div>
<!-- booking contents -->
<div style="left:26px;top:456px;width:243px;height:357px;border:1px solid #808080;border-radius:4px 4px 0 0;background:#d4d0c8"></div>
<div style="left:27px;top:457px;width:131px;height:23px;background:linear-gradient(to bottom,#87858b 0,#98969c 30%,#b2b0b6 70%,#c3c1c7 100%);border-radius:3px 0 0 0;border-right:1px solid #808080"></div>
<div style="left:158px;top:479px;width:110px;height:1px;background:#808080"></div>
<span class="t" style="left:49px;top:463px;color:#dcd9d3;letter-spacing:-0.15px">Booking contents</span>
<svg style="left:140px;top:463px" width="10" height="10" viewBox="0 0 10 10"><path d="M1 0h2l2 2.500L7 0h2l1 1-3 4 3 4-1 1H7L5 7.500 3 10H1L0 9l3-4-3-4z" fill="#fff" stroke="#222" stroke-width=".9"/></svg>
<div style="left:234px;top:461px;width:10px;height:4px;border:1px solid #404040;background:#fff"></div>
<div style="left:252px;top:461px;width:10px;height:10px;border:1px solid #404040;background:#fff"></div>
<div style="left:252px;top:463px;width:10px;height:1px;background:#404040"></div>
<div style="left:27px;top:480px;width:241px;height:332px;border:2px solid #c3c1c7;"></div>
<div style="left:29px;top:505px;width:237px;height:1px;background:#808080"></div>
<div style="left:29px;top:506px;width:237px;height:250px;background:#fff"></div>
<span class="t" style="left:52px;top:508px;">Extras</span>
<span class="t r" style="left:63px;width:200px;top:508px;">0.00</span>
<span class="t" style="left:52px;top:524px;">Passengers</span>
<span class="t r" style="left:63px;width:200px;top:524px;">0</span>
<span class="t" style="left:52px;top:540px;">Payments</span>
<span class="t r" style="left:63px;width:200px;top:540px;">0.00</span>
<span class="t" style="left:52px;top:556px;">Refunds</span>
<span class="t r" style="left:63px;width:200px;top:556px;">0.00</span>
<span class="t" style="left:33px;top:767px;font-weight:bold;letter-spacing:0.5px">Deposit</span>
<span class="t r" style="left:61px;width:200px;top:767px;font-weight:bold;letter-spacing:0.3px">0.00</span>
<span class="t" style="left:33px;top:780px;font-weight:bold;letter-spacing:0.5px">Profit</span>
<span class="t r" style="left:61px;width:200px;top:780px;font-weight:bold;letter-spacing:0.3px">0.00</span>
<span class="t" style="left:33px;top:793px;font-weight:bold;letter-spacing:0.5px">Total</span>
<span class="t r" style="left:61px;width:200px;top:793px;font-weight:bold;letter-spacing:0.3px">0.00</span>
<!-- editor area -->
<div style="left:272px;top:95px;width:959px;height:718px;border:1px solid #808080;border-radius:4px 4px 0 0;background:#d4d0c8"></div>
<div style="left:273px;top:118px;width:957px;height:694px;background:#a6caf0"></div>
<div style="left:273px;top:118px;width:957px;height:1px;background:#808080"></div>
<div style="left:275px;top:119px;width:953px;height:691px;background:#d4d0c8"></div>
<div style="left:275px;top:119px;width:953px;height:63px;background:linear-gradient(to bottom,#a6caf0 0,#a9cbee 12%,#bccfe2 50%,#ced0d2 85%,#d4d0c8 100%);"></div>
<div style="left:275px;top:182px;width:953px;height:1px;background:#0a246a"></div>
<div style="left:273px;top:96px;width:144px;height:23px;background:linear-gradient(to bottom,#0a246a 0,#2b4c94 12%,#6f98d6 45%,#a6caf0 100%);border-radius:4px 0 0 0;border-right:1px solid #808080"></div>
<div style="left:273px;top:96px;width:143px;height:23px;background:linear-gradient(100deg,rgba(10,36,106,.0) 0,rgba(10,36,106,0) 100%);"></div>
<span class="t" style="left:295px;top:102px;color:#fff;letter-spacing:0.3px">Book. ref.: &lt;none&gt;</span>
<svg style="left:399px;top:102px" width="10" height="10" viewBox="0 0 10 10"><path d="M1 0h2l2 2.500L7 0h2l1 1-3 4 3 4-1 1H7L5 7.500 3 10H1L0 9l3-4-3-4z" fill="#fff" stroke="#222" stroke-width=".9"/></svg>
<div style="left:417px;top:96px;width:149px;height:22px;border-right:1px solid #808080;"></div>
<span class="t" style="left:440px;top:102px;letter-spacing:-0.1px">Direct Clients Search</span>
<div style="left:1196px;top:100px;width:10px;height:4px;border:1px solid #404040;background:#fff"></div>
<div style="left:1214px;top:100px;width:10px;height:10px;border:1px solid #404040;background:#fff"></div>
<div style="left:1214px;top:102px;width:10px;height:1px;background:#404040"></div>
<span class="t" style="left:334px;top:138px;font-size:17px;line-height:22px;height:22px;color:#0a246a;letter-spacing:0.55px;-webkit-text-stroke:0.3px #0a246a">Addon Tour Search Results</span>
<span class="t" style="left:949px;top:154px;color:#808080;text-shadow:1px 1px #fff">More</span>
<span class="t" style="left:985px;top:154px;color:#808080;text-shadow:1px 1px #fff">Stop</span>
<span class="t" style="left:1025px;top:154px;color:#000;">Basket</span>
<span class="t" style="left:1068px;top:154px;color:#000;">Nett Price</span>
<span class="t" style="left:1134px;top:154px;color:#000;letter-spacing:0.1px">Navigate</span>
<span class="t" style="left:1187px;top:154px;color:#000;">Close</span>
<div style="left:1016px;top:135px;width:1px;height:32px;background:#808080"></div>
<div style="left:1017px;top:135px;width:1px;height:32px;background:#fff"></div>
<div style="left:1126px;top:135px;width:1px;height:32px;background:#808080"></div>
<div style="left:1127px;top:135px;width:1px;height:32px;background:#fff"></div>
<!-- search form -->
<span class="t" style="left:279px;top:196px;">Depart Dates</span>
<div class="sunk" style="left:349px;top:191px;width:117px;height:21px;background:#fff"></div>
<span class="t" style="left:353px;top:196px;">28/03/2017</span>
<div style="left:448px;top:193px;width:16px;height:16px;background:#dad6cf;border-radius:3px;box-shadow:inset 1px 1px #efece8,inset -1px -1px #aaa59d,inset -2px -2px #c8c3bb;"></div>
<svg style="left:452px;top:199px" width="7" height="4" viewBox="0 0 7 4"><path d="M0 0h7L3.500 4z" fill="#000"/></svg>
<div class="sunk" style="left:471px;top:191px;width:117px;height:21px;background:#fff"></div>
<span class="t" style="left:475px;top:196px;">28/03/2017</span>
<div style="left:570px;top:193px;width:16px;height:16px;background:#dad6cf;border-radius:3px;box-shadow:inset 1px 1px #efece8,inset -1px -1px #aaa59d,inset -2px -2px #c8c3bb;"></div>
<svg style="left:574px;top:199px" width="7" height="4" viewBox="0 0 7 4"><path d="M0 0h7L3.500 4z" fill="#000"/></svg>
<span class="t" style="left:279px;top:221px;">Duration</span>
<div class="sunk" style="left:349px;top:217px;width:32px;height:19px;background:#fff"></div>
<span class="t r" style="left:175px;width:200px;top:221px;">21</span>
<span class="t" style="left:385px;top:221px;">day(s)</span>
<div class="sunk" style="left:422px;top:217px;width:24px;height:19px;background:#fff"></div>
<span class="t r" style="left:240px;width:200px;top:221px;">0</span>
<span class="t" style="left:450px;top:221px;">hour(s)</span>
<span class="t" style="left:279px;top:242px;">Region</span>
<div class="sunk" style="left:349px;top:241px;width:240px;height:20px;background:#fff"></div>
<div style="left:571px;top:243px;width:16px;height:16px;background:#dad6cf;border-radius:3px;box-shadow:inset 1px 1px #efece8,inset -1px -1px #aaa59d,inset -2px -2px #c8c3bb;"></div>
<svg style="left:575px;top:249px" width="7" height="4" viewBox="0 0 7 4"><path d="M0 0h7L3.500 4z" fill="#000"/></svg>
<div class="sunk" style="left:349px;top:262px;width:240px;height:84px;background:#fff"></div>
<div style="left:351px;top:264px;width:220px;height:15px;background:#d4d0c8"></div>
<span class="t" style="left:353px;top:266px;letter-spacing:-0.12px">Orlando ~ Florida ~ USA</span>
<div style="left:351px;top:279px;width:220px;height:1px;background:#d4d0c8"></div>
<span class="t" style="left:353px;top:281px;letter-spacing:-0.12px">Florida ~ USA</span>
<div style="left:351px;top:294px;width:220px;height:1px;background:#d4d0c8"></div>
<span class="t" style="left:353px;top:296px;letter-spacing:-0.12px">Cocoa Beach ~ Florida ~ USA</span>
<div style="left:351px;top:309px;width:220px;height:1px;background:#d4d0c8"></div>
<span class="t" style="left:353px;top:311px;letter-spacing:-0.12px">Panama City/Pensacola ~  Florida  ~ USA</span>
<div style="left:351px;top:324px;width:220px;height:1px;background:#d4d0c8"></div>
<span class="t" style="left:353px;top:326px;letter-spacing:-0.12px">Lakeland ~ Florida ~ United States</span>
<div style="left:351px;top:339px;width:220px;height:1px;background:#d4d0c8"></div>
<div style="left:351px;top:340px;width:220px;height:4px;overflow:hidden"><span class="t" style="left:2px;top:2px;">Kissimmee ~ Florida ~ USA</span></div>
<div style="left:571px;top:264px;width:16px;height:80px;background:repeating-conic-gradient(#fff 0 25%,#d4d0c8 0 50%) 0 0/2px 2px"></div>
<div class="rais2" style="left:571px;top:264px;width:16px;height:16px;"></div>
<svg style="left:575px;top:270px" width="7" height="4" viewBox="0 0 7 4"><path d="M0 4h7L3.500 0z" fill="#000"/></svg>
<div class="rais2" style="left:571px;top:280px;width:16px;height:23px;"></div>
<div class="rais2" style="left:571px;top:328px;width:16px;height:16px;"></div>
<svg style="left:575px;top:334px" width="7" height="4" viewBox="0 0 7 4"><path d="M0 0h7L3.500 4z" fill="#000"/></svg>
<span class="t" style="left:603px;top:196px;">Search Type</span>
<div class="sunk" style="left:669px;top:191px;width:240px;height:21px;background:#fff"></div>
<span class="t" style="left:673px;top:196px;">Addon Tour Search</span>
<div style="left:891px;top:193px;width:16px;height:16px;background:#dad6cf;border-radius:3px;box-shadow:inset 1px 1px #efece8,inset -1px -1px #aaa59d,inset -2px -2px #c8c3bb;"></div>
<svg style="left:895px;top:199px" width="7" height="4" viewBox="0 0 7 4"><path d="M0 0h7L3.500 4z" fill="#000"/></svg>
<div style="left:604px;top:223px;width:309px;height:123px;border:1px solid #fff;border-radius:4px"></div>
<div style="left:607px;top:218px;width:79px;height:12px;background:#d4d0c8"></div>
<span class="t" style="left:608px;top:218px;letter-spacing:-0.2px">Passenger ages</span>
<div style="left:609px;top:230px;width:299px;height:111px;background:#fff;border:1px solid #404040"></div>
<div class="hdr" style="left:610px;top:231px;width:30px;height:18px;"></div>
<div class="hdr" style="left:640px;top:231px;width:30px;height:18px;"></div>
<span class="t" style="left:642px;top:234px;">Qty</span>
<div class="hdr" style="left:670px;top:231px;width:60px;height:18px;"></div>
<span class="t" style="left:672px;top:234px;">1st pax</span>
<div class="hdr" style="left:730px;top:231px;width:60px;height:18px;"></div>
<span class="t" style="left:732px;top:234px;">2nd pax</span>
<div style="left:790px;top:231px;width:117px;height:18px;overflow:hidden"><div class="hdr" style="left:0;top:0;width:140px;height:18px"></div></div>
<div class="hdr" style="left:610px;top:249px;width:30px;height:15px;"></div>
<span class="t" style="left:612px;top:251px;">AD</span>
<div style="left:640px;top:249px;width:30px;height:14px;background:#d4d0c8"></div>
<span class="t r" style="left:467px;width:200px;top:250px;">2</span>
<span class="t r" style="left:527px;width:200px;top:250px;">0</span>
<span class="t r" style="left:587px;width:200px;top:250px;">0</span>
<div style="left:640px;top:263px;width:267px;height:1px;background:#d4d0c8"></div>
<div style="left:669px;top:249px;width:1px;height:15px;background:#d4d0c8"></div>
<div style="left:729px;top:249px;width:1px;height:15px;background:#d4d0c8"></div>
<div style="left:789px;top:249px;width:1px;height:15px;background:#d4d0c8"></div>
<div class="hdr" style="left:610px;top:264px;width:30px;height:15px;"></div>
<span class="t" style="left:612px;top:266px;">CH</span>
<span class="t r" style="left:467px;width:200px;top:265px;">0</span>
<span class="t r" style="left:527px;width:200px;top:265px;">N/A</span>
<span class="t r" style="left:587px;width:200px;top:265px;">N/A</span>
<div style="left:640px;top:278px;width:267px;height:1px;background:#d4d0c8"></div>
<div style="left:669px;top:264px;width:1px;height:15px;background:#d4d0c8"></div>
<div style="left:729px;top:264px;width:1px;height:15px;background:#d4d0c8"></div>
<div style="left:789px;top:264px;width:1px;height:15px;background:#d4d0c8"></div>
<div class="hdr" style="left:610px;top:279px;width:30px;height:15px;"></div>
<span class="t" style="left:612px;top:281px;">IN</span>
<span class="t r" style="left:467px;width:200px;top:280px;">0</span>
<span class="t r" style="left:527px;width:200px;top:280px;">N/A</span>
<span class="t r" style="left:587px;width:200px;top:280px;">N/A</span>
<div style="left:640px;top:293px;width:267px;height:1px;background:#d4d0c8"></div>
<div style="left:669px;top:279px;width:1px;height:15px;background:#d4d0c8"></div>
<div style="left:729px;top:279px;width:1px;height:15px;background:#d4d0c8"></div>
<div style="left:789px;top:279px;width:1px;height:15px;background:#d4d0c8"></div>
<div style="left:849px;top:358px;width:69px;height:26px;background:#dbd7d1;border:1px solid #8e8a86;border-radius:3px;box-shadow:inset 1px 1px #efede9,inset -1px -1px #c2beb6;"></div>
<span class="t" style="left:877px;top:364px;"><u>S</u>earch</span>
<!-- results -->
<span class="t" style="left:277px;top:395px;font-weight:bold;letter-spacing:0.47px">Search results: 5/5</span>
<div class="sunk" style="left:277px;top:410px;width:949px;height:336px;background:#fff"></div>
<div style="left:280px;top:413px;width:943px;height:18px;background:#d4d0c8"></div>
<div class="hdr" style="left:280px;top:413px;width:120px;height:18px;"></div>
<span class="t" style="left:282px;top:416px;">Type</span>
<div class="hdr" style="left:400px;top:413px;width:240px;height:18px;"></div>
<span class="t" style="left:402px;top:416px;">Description</span>
<div class="hdr" style="left:640px;top:413px;width:120px;height:18px;"></div>
<span class="t" style="left:642px;top:416px;">Departure Resort</span>
<div class="hdr" style="left:760px;top:413px;width:60px;height:18px;"></div>
<span class="t" style="left:762px;top:416px;">Duration</span>
<div class="hdr" style="left:820px;top:413px;width:35px;height:18px;"></div>
<span class="t" style="left:822px;top:416px;">DOW</span>
<div class="hdr" style="left:855px;top:413px;width:68px;height:18px;"></div>
<span class="t" style="left:857px;top:416px;">From Date</span>
<div class="hdr" style="left:923px;top:413px;width:120px;height:18px;"></div>
<span class="t" style="left:925px;top:416px;">Supplier</span>
<div class="hdr" style="left:1043px;top:413px;width:25px;height:18px;"></div>
<span class="t" style="left:1043px;top:416px;width:25px;text-align:center">Er</span>
<div class="hdr" style="left:1068px;top:413px;width:25px;height:18px;"></div>
<span class="t" style="left:1068px;top:416px;width:25px;text-align:center">MS</span>
<div class="hdr" style="left:1093px;top:413px;width:70px;height:18px;"></div>
<span class="t r" style="left:959px;width:200px;top:416px;">Price</span>
<div style="left:1163px;top:413px;width:60px;height:18px;overflow:hidden"><div class="hdr" style="left:0;top:0;width:80px;height:18px"></div></div>
<span class="t r" style="left:1017px;width:200px;top:416px;">Basket</span>
<svg style="left:624px;top:416px" width="13" height="10" viewBox="0 0 13 10"><defs><linearGradient id="fg" x1="0" x2="1"><stop offset="0" stop-color="#fff"/><stop offset=".5" stop-color="#a8c0e0"/><stop offset="1" stop-color="#f0f4fa"/></linearGradient></defs><path d="M.8 .8h11.400L7.700 5.800V9.300H5.300V5.800z" fill="url(#fg)" stroke="#000" stroke-width="1.300" stroke-linejoin="miter"/></svg>
<svg style="left:1218px;top:419px" width="5" height="4" viewBox="0 0 5 4"><path d="M0 0h7L3.500 4z" fill="#808080"/></svg>
<div style="left:280px;top:431px;width:943px;height:15px;background:#ffff80;overflow:hidden"></div>
<span class="t" style="left:282px;top:432px;">Attraction Tickets</span>
<span class="t" style="left:401px;top:432px;letter-spacing:-0.32px">Discovery Cove ULTIMATE Package  Non Swim</span>
<span class="t" style="left:642px;top:432px;">Orlando (FL)</span>
<span class="t" style="left:822px;top:432px;">Tue</span>
<span class="t" style="left:856px;top:432px;">28/03/2017</span>
<span class="t" style="left:924px;top:432px;letter-spacing:-0.08px">Do Something Different</span>
<span class="t r" style="left:960px;width:200px;top:432px;">316.22</span>
<div style="left:1163px;top:431px;width:60px;height:15px;overflow:hidden"><span class="t" style="left:28px;top:1px;">316.22</span></div>
<div style="left:280px;top:445px;width:943px;height:1px;background:#d4d0c8"></div>
<div style="left:399px;top:431px;width:1px;height:15px;background:#d4d0c8"></div>
<div style="left:639px;top:431px;width:1px;height:15px;background:#d4d0c8"></div>
<div style="left:759px;top:431px;width:1px;height:15px;background:#d4d0c8"></div>
<div style="left:819px;top:431px;width:1px;height:15px;background:#d4d0c8"></div>
<div style="left:854px;top:431px;width:1px;height:15px;background:#d4d0c8"></div>
<div style="left:922px;top:431px;width:1px;height:15px;background:#d4d0c8"></div>
<div style="left:1042px;top:431px;width:1px;height:15px;background:#d4d0c8"></div>
<div style="left:1067px;top:431px;width:1px;height:15px;background:#d4d0c8"></div>
<div style="left:1092px;top:431px;width:1px;height:15px;background:#d4d0c8"></div>
<div style="left:1162px;top:431px;width:1px;height:15px;background:#d4d0c8"></div>
<div style="left:280px;top:446px;width:943px;height:15px;background:#ffff80;overflow:hidden"></div>
<span class="t" style="left:282px;top:447px;">Attraction Tickets</span>
<span class="t" style="left:401px;top:447px;letter-spacing:-0.32px">Discovery Cove ULTIMATE Package  Swim</span>
<span class="t" style="left:642px;top:447px;">Orlando (FL)</span>
<span class="t" style="left:822px;top:447px;">Tue</span>
<span class="t" style="left:856px;top:447px;">28/03/2017</span>
<span class="t" style="left:924px;top:447px;letter-spacing:-0.08px">Do Something Different</span>
<span class="t r" style="left:960px;width:200px;top:447px;">457.40</span>
<div style="left:1163px;top:446px;width:60px;height:15px;overflow:hidden"><span class="t" style="left:28px;top:1px;">457.40</span></div>
<div style="left:280px;top:460px;width:943px;height:1px;background:#d4d0c8"></div>
<div style="left:399px;top:446px;width:1px;height:15px;background:#d4d0c8"></div>
<div style="left:639px;top:446px;width:1px;height:15px;background:#d4d0c8"></div>
<div style="left:759px;top:446px;width:1px;height:15px;background:#d4d0c8"></div>
<div style="left:819px;top:446px;width:1px;height:15px;background:#d4d0c8"></div>
<div style="left:854px;top:446px;width:1px;height:15px;background:#d4d0c8"></div>
<div style="left:922px;top:446px;width:1px;height:15px;background:#d4d0c8"></div>
<div style="left:1042px;top:446px;width:1px;height:15px;background:#d4d0c8"></div>
<div style="left:1067px;top:446px;width:1px;height:15px;background:#d4d0c8"></div>
<div style="left:1092px;top:446px;width:1px;height:15px;background:#d4d0c8"></div>
<div style="left:1162px;top:446px;width:1px;height:15px;background:#d4d0c8"></div>
<div style="left:280px;top:461px;width:943px;height:15px;background:#ffff80;overflow:hidden"></div>
<span class="t" style="left:282px;top:462px;">Attraction Tickets</span>
<span class="t" style="left:401px;top:462px;letter-spacing:-0.15px">Disney 7 Day Ultimate Ticket</span>
<span class="t" style="left:642px;top:462px;">Orlando (FL)</span>
<span class="t" style="left:822px;top:462px;">Tue</span>
<span class="t" style="left:856px;top:462px;">28/03/2017</span>
<span class="t" style="left:924px;top:462px;letter-spacing:-0.08px">Do Something Different</span>
<span class="t r" style="left:960px;width:200px;top:462px;">675.36</span>
<div style="left:1163px;top:461px;width:60px;height:15px;overflow:hidden"><span class="t" style="left:28px;top:1px;">675.36</span></div>
<div style="left:280px;top:475px;width:943px;height:1px;background:#d4d0c8"></div>
<div style="left:399px;top:461px;width:1px;height:15px;background:#d4d0c8"></div>
<div style="left:639px;top:461px;width:1px;height:15px;background:#d4d0c8"></div>
<div style="left:759px;top:461px;width:1px;height:15px;background:#d4d0c8"></div>
<div style="left:819px;top:461px;width:1px;height:15px;background:#d4d0c8"></div>
<div style="left:854px;top:461px;width:1px;height:15px;background:#d4d0c8"></div>
<div style="left:922px;top:461px;width:1px;height:15px;background:#d4d0c8"></div>
<div style="left:1042px;top:461px;width:1px;height:15px;background:#d4d0c8"></div>
<div style="left:1067px;top:461px;width:1px;height:15px;background:#d4d0c8"></div>
<div style="left:1092px;top:461px;width:1px;height:15px;background:#d4d0c8"></div>
<div style="left:1162px;top:461px;width:1px;height:15px;background:#d4d0c8"></div>
<div style="left:280px;top:476px;width:943px;height:15px;background:#0a246a;overflow:hidden"></div>
<span class="t" style="left:282px;top:477px;color:#fff;">Attraction Tickets</span>
<span class="t" style="left:401px;top:477px;color:#fff;letter-spacing:-0.15px">Disney 14 Day Ultimate Ticket</span>
<span class="t" style="left:642px;top:477px;color:#fff;">Orlando (FL)</span>
<span class="t" style="left:822px;top:477px;color:#fff;">Tue</span>
<span class="t" style="left:856px;top:477px;color:#fff;">28/03/2017</span>
<span class="t" style="left:924px;top:477px;color:#fff;letter-spacing:-0.08px">Do Something Different</span>
<span class="t r" style="left:960px;width:200px;top:477px;color:#fff;">688.86</span>
<div style="left:1163px;top:476px;width:60px;height:15px;overflow:hidden"><span class="t" style="left:28px;top:1px;color:#fff;">688.86</span></div>
<div style="left:280px;top:491px;width:943px;height:15px;background:#ffff80;overflow:hidden"></div>
<span class="t" style="left:282px;top:492px;">Attraction Tickets</span>
<span class="t" style="left:401px;top:492px;letter-spacing:-0.15px">Disney 21 Day Ultimate Ticket</span>
<span class="t" style="left:642px;top:492px;">Orlando (FL)</span>
<span class="t" style="left:822px;top:492px;">Tue</span>
<span class="t" style="left:856px;top:492px;">28/03/2017</span>
<span class="t" style="left:924px;top:492px;letter-spacing:-0.08px">Do Something Different</span>
<span class="t r" style="left:960px;width:200px;top:492px;">734.52</span>
<div style="left:1163px;top:491px;width:60px;height:15px;overflow:hidden"><span class="t" style="left:28px;top:1px;">734.52</span></div>
<div style="left:280px;top:505px;width:943px;height:1px;background:#d4d0c8"></div>
<div style="left:399px;top:491px;width:1px;height:15px;background:#d4d0c8"></div>
<div style="left:639px;top:491px;width:1px;height:15px;background:#d4d0c8"></div>
<div style="left:759px;top:491px;width:1px;height:15px;background:#d4d0c8"></div>
<div style="left:819px;top:491px;width:1px;height:15px;background:#d4d0c8"></div>
<div style="left:854px;top:491px;width:1px;height:15px;background:#d4d0c8"></div>
<div style="left:922px;top:491px;width:1px;height:15px;background:#d4d0c8"></div>
<div style="left:1042px;top:491px;width:1px;height:15px;background:#d4d0c8"></div>
<div style="left:1067px;top:491px;width:1px;height:15px;background:#d4d0c8"></div>
<div style="left:1092px;top:491px;width:1px;height:15px;background:#d4d0c8"></div>
<div style="left:1162px;top:491px;width:1px;height:15px;background:#d4d0c8"></div>
<div style="left:280px;top:727px;width:943px;height:16px;background:repeating-conic-gradient(#fff 0 25%,#d4d0c8 0 50%) 0 0/2px 2px"></div>
<div class="rais2" style="left:280px;top:727px;width:16px;height:16px;"></div>
<svg style="left:285px;top:731px" width="4" height="7" viewBox="0 0 4 7"><path d="M4 0v7L0 3.500z" fill="#000"/></svg>
<div class="rais2" style="left:296px;top:727px;width:836px;height:16px;"></div>
<div class="rais2" style="left:1207px;top:727px;width:16px;height:16px;"></div>
<svg style="left:1213px;top:731px" width="4" height="7" viewBox="0 0 4 7"><path d="M0 0v7L4 3.500z" fill="#000"/></svg>
<span class="t" style="left:282px;top:770px;letter-spacing:0.06px">First portion: 1.6 sec, total search time: 1.6 sec</span>
<div class="rais2" style="left:1195px;top:765px;width:23px;height:22px;"></div>
<span class="t" style="left:1195px;top:767px;width:23px;text-align:center;font-family:'Liberation Serif',serif;font-weight:bold;font-size:16px;line-height:17px;height:17px;color:#0a4fa8">i</span>
<div style="left:275px;top:792px;width:953px;height:1px;background:#808080"></div>
<div style="left:275px;top:793px;width:53px;height:17px;background:#d4d0c8;border-right:1px solid #808080;"></div>
<span class="t" style="left:275px;top:795px;width:52px;text-align:center;color:#000;letter-spacing:-0.12px">Summary</span>
<div style="left:328px;top:793px;width:41px;height:17px;background:#d4d0c8;border-right:1px solid #808080;"></div>
<span class="t" style="left:328px;top:795px;width:40px;text-align:center;color:#000;letter-spacing:-0.12px">Search</span>
<div style="left:369px;top:793px;width:112px;height:17px;background:#ccffcc;border-right:1px solid #808080;"></div>
<span class="t" style="left:369px;top:795px;width:111px;text-align:center;color:#000;letter-spacing:-0.3px">Flt 2A MAN MCO MAN</span>
<div style="left:481px;top:793px;width:67px;height:17px;background:#ccffcc;border-right:1px solid #808080;"></div>
<span class="t" style="left:481px;top:795px;width:66px;text-align:center;color:#000;letter-spacing:-0.12px">Acc 2A MCO</span>
<div style="left:548px;top:793px;width:51px;height:17px;background:#ccffcc;border-right:1px solid #808080;"></div>
<span class="t" style="left:548px;top:795px;width:50px;text-align:center;color:#000;letter-spacing:-0.12px">Car MCO</span>
<div style="left:599px;top:792px;width:45px;height:18px;background:#008000;border-radius:0 0 3px 3px;"></div>
<span class="t" style="left:599px;top:795px;width:44px;text-align:center;color:#fff;letter-spacing:-0.12px">Tour 2A</span>
<div style="left:644px;top:793px;width:97px;height:17px;background:#d4d0c8;border-right:1px solid #808080;"></div>
<span class="t" style="left:644px;top:795px;width:96px;text-align:center;color:#000;letter-spacing:-0.25px">Financial Summary</span>
<!-- icons -->
<svg style="left:52px;top:120px" width="16" height="16" viewBox="0 0 16 16"><path d="M7.200 2.800 L8.500 2.800 L9.800 6.400 L10.900 7 L11 13 L8.800 13.500 L8.600 8.200 L7.400 7.600z" fill="#ffd820"/><circle cx="7.900" cy="4.400" r=".7" fill="#d06810"/><circle cx="10.100" cy="6.900" r=".8" fill="#c85010"/><circle cx="9.300" cy="9.600" r=".7" fill="#d86810"/><circle cx="9.200" cy="11.800" r=".7" fill="#d86810"/><path d="M3.500 0 L6.500 0 L7 .9 L7.500 0 L9.500 0 L10.500 1 L12.500 1.500 L14.500 3 L16 5 L16.200 6.600 L15.200 6.400 L14.600 5.300 L14.300 8.300 L13.200 8.500 L12.800 6 L11.600 5.200 L11.300 7 L10.200 7.200 L9.800 5 L8.800 4.600 L7.900 4.600 L7.300 6.300 L6.200 6.500 L6 4.500 L5 4.600 L4.600 7.300 L3.500 7.600 L3.400 5 L2.600 4.400 L1.600 5.500 L.4 5.300 L.6 4 L1.800 2.600 L3.400 1.400z" fill="#5cc010"/><path d="M3.600 2.200 L6.500 1.200 L9.500 1.300 L12.300 2.400 L14 4 L12 3.600 L10.500 3 L8.500 3.400 L6.500 2.800 L4.800 3.200 L2.500 3.600z" fill="#84dc18"/><path d="M3.800 5.200 L4.300 5 L4.300 6.800 L3.800 7zM13.400 6 L13.900 5.800 L13.900 7.800 L13.400 8z" fill="#8ce020"/><ellipse cx="8" cy="13.900" rx="7" ry="2.100" fill="#ffe800"/><path d="M1.200 14.300 C4 16.300 12 16.300 14.800 14.300 C12 15.300 4 15.300 1.200 14.300z" fill="#f8c000"/><ellipse cx="11.600" cy="11.900" rx="1.300" ry=".6" fill="#6a3808"/><path d="M8.800 13.500 L11 13 L11 11.500 L8.700 11.800z" fill="#ffd820"/><circle cx="9.200" cy="11.800" r=".7" fill="#d86810"/></svg>
<svg style="left:52px;top:137px" width="16" height="16" viewBox="0 0 16 16"><path d="M7.200 2.800 L8.500 2.800 L9.800 6.400 L10.900 7 L11 13 L8.800 13.500 L8.600 8.200 L7.400 7.600z" fill="#ffd820"/><circle cx="7.900" cy="4.400" r=".7" fill="#d06810"/><circle cx="10.100" cy="6.900" r=".8" fill="#c85010"/><circle cx="9.300" cy="9.600" r=".7" fill="#d86810"/><circle cx="9.200" cy="11.800" r=".7" fill="#d86810"/><path d="M3.500 0 L6.500 0 L7 .9 L7.500 0 L9.500 0 L10.500 1 L12.500 1.500 L14.500 3 L16 5 L16.200 6.600 L15.200 6.400 L14.600 5.300 L14.300 8.300 L13.200 8.500 L12.800 6 L11.600 5.200 L11.300 7 L10.200 7.200 L9.800 5 L8.800 4.600 L7.900 4.600 L7.300 6.300 L6.200 6.500 L6 4.500 L5 4.600 L4.600 7.300 L3.500 7.600 L3.400 5 L2.600 4.400 L1.600 5.500 L.4 5.300 L.6 4 L1.800 2.600 L3.400 1.400z" fill="#5cc010"/><path d="M3.600 2.200 L6.500 1.200 L9.500 1.300 L12.300 2.400 L14 4 L12 3.600 L10.500 3 L8.500 3.400 L6.500 2.800 L4.800 3.200 L2.500 3.600z" fill="#84dc18"/><path d="M3.800 5.200 L4.300 5 L4.300 6.800 L3.800 7zM13.400 6 L13.900 5.800 L13.900 7.800 L13.400 8z" fill="#8ce020"/><path d="M11 12.500h4.500v1.500h-2v1.500H10z" fill="#ffd000"/><rect x=".5" y="9.500" width="10.500" height="5.500" fill="#b8bc98" stroke="#6a6e50" stroke-width=".9"/><circle cx="5.700" cy="12.300" r="1.700" fill="#787c60"/><path d="M1.800 11h1.500M8.500 11H10" stroke="#fff" stroke-width=".8"/></svg>
<svg style="left:52px;top:154px" width="16" height="16" viewBox="0 0 16 16"><circle cx="7.500" cy="7.500" r="6.600" fill="#fff" stroke="#1e90ff" stroke-width="1.800"/><circle cx="7.500" cy="7.500" r="5.300" fill="#f4f4f4" stroke="#999" stroke-width=".6"/><path d="M7.500 3.500V7.500L10 6" stroke="#444" stroke-width=".9" fill="none"/><path d="M7.500 2.800v.8M7.500 11.400v.8M2.800 7.500h.8M11.400 7.500h.8" stroke="#555" stroke-width=".8"/><path d="M4.500 11.500 C6.500 13.300 10.500 13 12.800 9.500 L11.200 9 L15.300 6.500 L15.600 11.200 L14.200 10.400 C12 15 6.500 15.800 4.500 11.500z" fill="#58c818"/><path d="M6.500 13 L9 15.800 L11 13z" fill="#58c818"/></svg>
<svg style="left:52px;top:171px" width="16" height="16" viewBox="0 0 16 16"><circle cx="7.300" cy="2.200" r="1.700" fill="#f4b020"/><path d="M6 4 L10 5 L10.500 9.500 L7 9z" fill="#2a50a8"/><path d="M8 5.500 L11.500 7 L11 10 L8.500 9z" fill="#3aa040"/><path d="M7 9 L9 11 L14 12" stroke="#1a2a90" stroke-width="1.800" fill="none"/><path d="M7 9 L6 12 L6.500 15.500" stroke="#1a2a90" stroke-width="1.800" fill="none"/><path d="M6 5 L3 6.500M4.500 1.200 L6.200 1.800" stroke="#f4b020" stroke-width="1.200"/><path d="M6 16h3" stroke="#f4b020" stroke-width="1.200"/></svg>
<svg style="left:52px;top:188px" width="16" height="16" viewBox="0 0 16 16"><path d="M6.300 2 C6.300 .2 10.200 .2 10.200 2 L10.200 2.600 L6.300 2.600z" fill="#f8b800"/><circle cx="8.200" cy="2.900" r="1.500" fill="#fff0c0"/><path d="M6 2.300h4.600" stroke="#f8a000" stroke-width=".8"/><path d="M4.500 4.800 C6 3.800 10.500 3.800 12 4.800 L14.600 9.500 L12.800 10.800 L12.200 9.500 L12 13 H4.500 L4.300 9.500 L3.700 10.800 L1.900 9.500z" fill="#f83018"/><path d="M4.500 4.800 C6 3.800 10.500 3.800 12 4.800 L12.500 6 C10.500 5 6 5 4 6z" fill="#ff6040"/><path d="M7 6.200h2.800v3.600H7z" fill="#30c850"/><circle cx="2.600" cy="10.400" r="1.500" fill="#ffd020"/><circle cx="13.900" cy="10.400" r="1.500" fill="#ffd020"/><path d="M5.500 12.600h5.800v2h-5.800z" fill="#28c0d0"/><path d="M4.200 13h1.300v1.800H4.200zM11.300 13h1.300v1.800h-1.300z" fill="#ffd020"/><path d="M5 15h6.500" stroke="#f8c820" stroke-width=".9"/></svg>
<svg style="left:52px;top:205px" width="16" height="16" viewBox="0 0 16 16"><path d="M0 1.500h12.500v9.500H0z" fill="#2a8ae0"/><path d="M0 1.500h12.500v1.700H0z" fill="#58b0f4"/><path d="M0 3.600h12.500v1.900H0z" fill="#0a2a58"/><path d="M0 11 L6 5.500H0z" fill="#1a6ac0" opacity=".6"/><path d="M13.800 6.500 C12 4.800 8.500 5.300 8.500 7.800 C8.500 10.500 13.500 9.800 13.500 12.200 C13.500 14 10 14.300 7.800 12.500" stroke="#70c018" stroke-width="2" fill="none"/><path d="M11 3.800v12" stroke="#70c018" stroke-width="1.500"/><path d="M13.800 6.500 C12 4.800 8.500 5.300 8.500 7.800" stroke="#b8e860" stroke-width=".7" fill="none"/></svg>
<svg style="left:52px;top:222px" width="16" height="16" viewBox="0 0 16 16"><rect x="1" y=".6" width="8.500" height="11.500" fill="#fff" stroke="#506070" stroke-width="1"/><circle cx="4" cy="5" r="2.200" fill="#38b028"/><rect x="4" y="2.600" width="9" height="12.500" fill="#fff" stroke="#405060" stroke-width="1.100"/><circle cx="8.500" cy="7" r="3" fill="#28a818"/><circle cx="8.500" cy="7" r="1.800" fill="#68e048"/><path d="M8.500 5v2.500" stroke="#fff" stroke-width="1"/><path d="M5.500 12.300h6" stroke="#202020" stroke-width="1.200"/></svg>
<svg style="left:52px;top:239px" width="16" height="16" viewBox="0 0 16 16"><path d="M1 .5h9l4 4v11H1z" fill="#dce4f0" stroke="#8090b0" stroke-width="1"/><path d="M10 .5v4h4z" fill="#f8f8ff" stroke="#8090b0" stroke-width=".8"/><circle cx="7.500" cy="9" r="4.800" fill="#2838c8"/><path d="M5 6.500 C6.500 5 8.500 5.500 9 7 C9.500 8.500 8 9.500 7 9.500 C6 9.500 5.500 11 6.500 12 C5 12 3.500 10 4 8z" fill="#38b8e8"/><path d="M10 10 C11 9.500 12 10.500 11 12 C10.300 12.500 9.500 12 10 10z" fill="#58d058"/><path d="M3.500 11 C5 14 10 14.500 12 11" stroke="#7030b0" stroke-width="1" fill="none"/></svg>
<svg style="left:52px;top:256px" width="16" height="16" viewBox="0 0 16 16"><path d="M1 6 L10 1 L15.500 3.500 L6.500 8.500z" fill="#ffd428"/><path d="M1 6 L6.500 8.500 V10.500 L1 8z" fill="#f09800"/><path d="M6.500 8.500 L15.500 3.500 V5.500 L6.500 10.500z" fill="#e8b010"/><path d="M1 8.500 L6.500 11 L15.500 6 V8 L6.500 13 L1 10.500z" fill="#f8c018"/><path d="M1 10.800 L6.500 13.300 L15.500 8.300 V11 L8 16 L1 13z" fill="#28a0e8"/><path d="M6.500 13.300 L15.500 8.300 V11 L8 16z" fill="#1070c0"/><path d="M3 5.800 L11 1.800M4.500 6.600 L12.500 2.500M6 7.400 L14 3.200" stroke="#c88800" stroke-width=".6"/><path d="M9 13.500 L11 12.300 V13.500 L9 14.700z" fill="#fff"/></svg>
<svg style="left:276px;top:98px" width="16" height="16" viewBox="0 0 16 16"><path d="M7.200 2.800 L8.500 2.800 L9.800 6.400 L10.900 7 L11 13 L8.800 13.500 L8.600 8.200 L7.400 7.600z" fill="#ffd820"/><circle cx="7.900" cy="4.400" r=".7" fill="#d06810"/><circle cx="10.100" cy="6.900" r=".8" fill="#c85010"/><circle cx="9.300" cy="9.600" r=".7" fill="#d86810"/><circle cx="9.200" cy="11.800" r=".7" fill="#d86810"/><path d="M3.500 0 L6.500 0 L7 .9 L7.500 0 L9.500 0 L10.500 1 L12.500 1.500 L14.500 3 L16 5 L16.200 6.600 L15.200 6.400 L14.600 5.300 L14.300 8.300 L13.200 8.500 L12.800 6 L11.600 5.200 L11.300 7 L10.200 7.200 L9.800 5 L8.800 4.600 L7.900 4.600 L7.300 6.300 L6.200 6.500 L6 4.500 L5 4.600 L4.600 7.300 L3.500 7.600 L3.400 5 L2.600 4.400 L1.600 5.500 L.4 5.300 L.6 4 L1.800 2.600 L3.400 1.400z" fill="#5cc010"/><path d="M3.600 2.200 L6.500 1.200 L9.500 1.300 L12.300 2.400 L14 4 L12 3.600 L10.500 3 L8.500 3.400 L6.500 2.800 L4.800 3.200 L2.500 3.600z" fill="#84dc18"/><path d="M3.800 5.200 L4.300 5 L4.300 6.800 L3.800 7zM13.400 6 L13.900 5.800 L13.900 7.800 L13.400 8z" fill="#8ce020"/><ellipse cx="8" cy="13.900" rx="7" ry="2.100" fill="#ffe800"/><path d="M1.200 14.300 C4 16.300 12 16.300 14.800 14.300 C12 15.300 4 15.300 1.200 14.300z" fill="#f8c000"/><ellipse cx="11.600" cy="11.900" rx="1.300" ry=".6" fill="#6a3808"/><path d="M8.800 13.500 L11 13 L11 11.500 L8.700 11.800z" fill="#ffd820"/><circle cx="9.200" cy="11.800" r=".7" fill="#d86810"/></svg>
<svg style="left:421px;top:99px" width="16" height="16" viewBox="0 0 16 16"><path d="M6.300 2 C6.300 .2 10.200 .2 10.200 2 L10.200 2.600 L6.300 2.600z" fill="#f8b800"/><circle cx="8.200" cy="2.900" r="1.500" fill="#fff0c0"/><path d="M6 2.300h4.600" stroke="#f8a000" stroke-width=".8"/><path d="M4.500 4.800 C6 3.800 10.500 3.800 12 4.800 L14.600 9.500 L12.800 10.800 L12.200 9.500 L12 13 H4.500 L4.300 9.500 L3.700 10.800 L1.900 9.500z" fill="#f83018"/><path d="M4.500 4.800 C6 3.800 10.500 3.800 12 4.800 L12.500 6 C10.500 5 6 5 4 6z" fill="#ff6040"/><path d="M7 6.200h2.800v3.600H7z" fill="#30c850"/><circle cx="2.600" cy="10.400" r="1.500" fill="#ffd020"/><circle cx="13.900" cy="10.400" r="1.500" fill="#ffd020"/><path d="M5.500 12.600h5.800v2h-5.800z" fill="#28c0d0"/><path d="M4.200 13h1.300v1.800H4.200zM11.300 13h1.300v1.800h-1.300z" fill="#ffd020"/><path d="M5 15h6.500" stroke="#f8c820" stroke-width=".9"/></svg>
<svg style="left:30px;top:460px" width="16" height="16" viewBox="0 0 16 16"><path d="M7.200 2.800 L8.500 2.800 L9.800 6.400 L10.900 7 L11 13 L8.800 13.500 L8.600 8.200 L7.400 7.600z" fill="#ffd820"/><circle cx="7.900" cy="4.400" r=".7" fill="#d06810"/><circle cx="10.100" cy="6.900" r=".8" fill="#c85010"/><circle cx="9.300" cy="9.600" r=".7" fill="#d86810"/><circle cx="9.200" cy="11.800" r=".7" fill="#d86810"/><path d="M3.500 0 L6.500 0 L7 .9 L7.500 0 L9.500 0 L10.500 1 L12.500 1.500 L14.500 3 L16 5 L16.200 6.600 L15.200 6.400 L14.600 5.300 L14.300 8.300 L13.200 8.500 L12.800 6 L11.600 5.200 L11.300 7 L10.200 7.200 L9.800 5 L8.800 4.600 L7.900 4.600 L7.300 6.300 L6.200 6.500 L6 4.500 L5 4.600 L4.600 7.300 L3.500 7.600 L3.400 5 L2.600 4.400 L1.600 5.500 L.4 5.300 L.6 4 L1.800 2.600 L3.400 1.400z" fill="#5cc010"/><path d="M3.600 2.200 L6.500 1.200 L9.500 1.300 L12.300 2.400 L14 4 L12 3.600 L10.500 3 L8.500 3.400 L6.500 2.800 L4.800 3.200 L2.500 3.600z" fill="#84dc18"/><path d="M3.800 5.200 L4.300 5 L4.300 6.800 L3.800 7zM13.400 6 L13.900 5.800 L13.900 7.800 L13.400 8z" fill="#8ce020"/><path d="M11 13h4.500v1.500H10z" fill="#ffd000"/><rect x="1" y="9" width="8.500" height="6.500" rx="1" fill="#6a3818" stroke="#3a1c08" stroke-width=".8"/><path d="M3.500 9V7.800h3.500V9" stroke="#3a1c08" stroke-width=".9" fill="none"/><path d="M3 9.500v5.500M7.500 9.500v5.500" stroke="#a86830" stroke-width=".8"/></svg>
<svg style="left:128px;top:486px" width="13" height="13" viewBox="0 0 13 13"><path d="M4.500 .5h4v4h4v4h-4v4h-4v-4h-4v-4h4z" fill="#7cc838" stroke="#4a9818" stroke-width="1"/><path d="M5.500 1.500h2v4h4" stroke="#c8f090" stroke-width=".8" fill="none"/></svg>
<svg style="left:150px;top:485px" width="16" height="16" viewBox="0 0 16 16"><circle cx="7.500" cy="7.500" r="6.600" fill="#fff" stroke="#1e90ff" stroke-width="1.800"/><circle cx="7.500" cy="7.500" r="5.300" fill="#f4f4f4" stroke="#999" stroke-width=".6"/><path d="M7.500 3.500V7.500L10 6" stroke="#444" stroke-width=".9" fill="none"/><path d="M7.500 2.800v.8M7.500 11.400v.8M2.800 7.500h.8M11.400 7.500h.8" stroke="#555" stroke-width=".8"/><path d="M4.500 11.500 C6.500 13.300 10.500 13 12.800 9.500 L11.200 9 L15.300 6.500 L15.600 11.200 L14.200 10.400 C12 15 6.500 15.800 4.500 11.500z" fill="#58c818"/><path d="M6.500 13 L9 15.800 L11 13z" fill="#58c818"/></svg>
<svg style="left:174px;top:485px" width="17" height="16" viewBox="0 0 17 16"><path d="M.5 1.500h11.500l-1.500 6H2.500z" fill="#e8e8e8" stroke="#707070" stroke-width=".9"/><path d="M3.500 2v5M5.500 2v5M7.500 2v5M9.500 2v5" stroke="#707070" stroke-width=".8"/><path d="M12 1.500 L13 .5 H15.500" stroke="#707070" stroke-width=".9" fill="none"/><path d="M2.500 7.500v3h9" stroke="#707070" stroke-width=".9" fill="none"/><circle cx="3.500" cy="13.500" r="1.600" fill="#fff" stroke="#e01818" stroke-width="1.100"/><circle cx="8.500" cy="13.500" r="1.600" fill="#fff" stroke="#e01818" stroke-width="1.100"/><path d="M8 6.500h4V4l4.500 4-4.500 4V9.500H8z" fill="#28b828" stroke="#107010" stroke-width=".7"/></svg>
<svg style="left:200px;top:487px" width="13" height="13" viewBox="0 0 13 13"><path d="M2 .8 L6.500 4.500 L11 .8 L12.800 2.600 L9 6.500 L12.800 10.500 L11 12.300 L6.500 8.600 L2 12.300 L.3 10.500 L4 6.500 L.3 2.600z" fill="#f03838" stroke="#c01010" stroke-width=".8"/><path d="M2.200 2 L6.500 5.500 L10.800 2" stroke="#ff9090" stroke-width=".8" fill="none"/></svg>
<svg style="left:222px;top:485px" width="16" height="16" viewBox="0 0 16 16"><path d="M7.200 2.800 L8.500 2.800 L9.800 6.400 L10.900 7 L11 13 L8.800 13.500 L8.600 8.200 L7.400 7.600z" fill="#ffd820"/><circle cx="7.900" cy="4.400" r=".7" fill="#d06810"/><circle cx="10.100" cy="6.900" r=".8" fill="#c85010"/><circle cx="9.300" cy="9.600" r=".7" fill="#d86810"/><circle cx="9.200" cy="11.800" r=".7" fill="#d86810"/><path d="M3.500 0 L6.500 0 L7 .9 L7.500 0 L9.500 0 L10.500 1 L12.500 1.500 L14.500 3 L16 5 L16.200 6.600 L15.200 6.400 L14.600 5.300 L14.300 8.300 L13.200 8.500 L12.800 6 L11.600 5.200 L11.300 7 L10.200 7.200 L9.800 5 L8.800 4.600 L7.900 4.600 L7.300 6.300 L6.200 6.500 L6 4.500 L5 4.600 L4.600 7.300 L3.500 7.600 L3.400 5 L2.600 4.400 L1.600 5.500 L.4 5.300 L.6 4 L1.800 2.600 L3.400 1.400z" fill="#5cc010"/><path d="M3.600 2.200 L6.500 1.200 L9.500 1.300 L12.300 2.400 L14 4 L12 3.600 L10.500 3 L8.500 3.400 L6.500 2.800 L4.800 3.200 L2.500 3.600z" fill="#84dc18"/><path d="M3.800 5.200 L4.300 5 L4.300 6.800 L3.800 7zM13.400 6 L13.900 5.800 L13.900 7.800 L13.400 8z" fill="#8ce020"/><ellipse cx="8" cy="13.900" rx="7" ry="2.100" fill="#ffe800"/><path d="M1.200 14.300 C4 16.300 12 16.300 14.800 14.300 C12 15.300 4 15.300 1.200 14.300z" fill="#f8c000"/><ellipse cx="11.600" cy="11.900" rx="1.300" ry=".6" fill="#6a3808"/><path d="M8.800 13.500 L11 13 L11 11.500 L8.700 11.800z" fill="#ffd820"/><circle cx="9.200" cy="11.800" r=".7" fill="#d86810"/></svg>
<span class="t" style="left:250px;top:484px;width:9px;text-align:center;font-family:'Liberation Serif',serif;font-weight:bold;font-size:17px;line-height:17px;height:17px;color:#0a4fa8">i</span>
<svg style="left:276px;top:122px" width="70" height="56" viewBox="0 0 70 56">
<defs><linearGradient id="ws" x1="0" y1="0" x2="0.300" y2="1"><stop offset="0" stop-color="#1878b8"/><stop offset=".55" stop-color="#10a8d8"/><stop offset="1" stop-color="#20e0f0"/></linearGradient></defs>
<path d="M8.100 16.300 L35 9 L52.600 10 L33.200 18.800z" fill="#f43838"/>
<path d="M10 16.400 L35 9.800 L50 10.600 L33 17.600z" fill="#ff5454"/>
<path d="M8.100 16.300 L33.200 18.800 L32.600 46.300 L6.900 41.300z" fill="#d41818"/>
<path d="M33.200 18.800 L52.600 10 L52.600 27 L32.600 46.300z" fill="#c01010"/>
<path d="M33.200 18.800 L52.600 10 L52.600 11.600 L33.200 20.600z" fill="#e82828"/>
<path d="M8.300 18.300 L32.800 20.600 L32.800 34 L8.300 30.500z" fill="url(#ws)"/>
<path d="M8.300 18.300 L17.800 19.200 L12 31 L8.300 30.500z" fill="#2468a8" opacity=".55"/>
<path d="M18.300 19.200 V32" stroke="#b02020" stroke-width="1"/>
<path d="M34.200 22 L37.200 20.600 V30 L34.200 31.600z" fill="#18b8e0"/>
<path d="M38.200 18.600 L43 16.300 V25 L38.200 28z" fill="url(#ws)"/><path d="M43.600 16 L47.300 14.300 V22.500 L43.600 24.800z" fill="url(#ws)"/><path d="M48 13.900 L51.600 12.300 V20 L48 22z" fill="#1c80b8"/>
<path d="M7.200 34.200 L32.600 39.200 V42 L7.200 37z" fill="#384848"/>
<path d="M33 36 L52.600 17.500 V19 L33 37.800z" fill="#e83030"/>
<path d="M7.500 36.800 L11.600 37.600 V40.400 L7.500 39.600z" fill="#fff"/><path d="M25.600 40.600 L29 41.300 V44.300 L25.600 43.600z" fill="#fff"/><path d="M29 41.300 L30.800 41.700 V44.700 L29 44.300z" fill="#f8b020"/>
<ellipse cx="36.700" cy="42" rx="2.300" ry="5" fill="#181818"/><ellipse cx="36.900" cy="42" rx="1.100" ry="2.600" fill="#e8e8e8"/>
<ellipse cx="48" cy="31" rx="1.600" ry="3.400" fill="#181818"/><ellipse cx="48.100" cy="31" rx=".7" ry="1.600" fill="#d8d8d8"/>
<path d="M5.100 21.200 Q5.100 20.600 6 20.800 L7.900 21.400 V25.800 L6 25.400 Q5.100 25.200 5.100 24.600z" fill="#303030"/>
<path d="M36 23.500 L37.300 23 V29.500 L36 30z" fill="#282828"/>
</svg>
<svg style="left:955px;top:139px" width="13" height="11" viewBox="0 0 13 11"><path d="M.5 .5h12v3L6.500 10.500 .5 3.500z" fill="#808080"/><path d="M1.500 1.500h10" stroke="#b0b0b0" stroke-width="1"/></svg>
<svg style="left:990px;top:139px" width="10" height="10" viewBox="0 0 10 10"><rect x=".5" y=".5" width="9" height="9" fill="#808080"/><path d="M1.500 5V1.500H5" stroke="#d0d0d0" stroke-width="1.200" fill="none"/></svg>
<svg style="left:1033px;top:136px" width="16" height="16" viewBox="0 0 16 16"><path d="M.5 1.500h11.500l-1.500 6H2.500z" fill="#e8e8e8" stroke="#707070" stroke-width=".9"/><path d="M3.500 2v5M5.500 2v5M7.500 2v5M9.500 2v5" stroke="#707070" stroke-width=".8"/><path d="M12 1.500 L13 .5 H15.500" stroke="#707070" stroke-width=".9" fill="none"/><path d="M2.500 7.500v3h9" stroke="#707070" stroke-width=".9" fill="none"/><circle cx="3.500" cy="13.500" r="1.600" fill="#fff" stroke="#e01818" stroke-width="1.100"/><circle cx="8.500" cy="13.500" r="1.600" fill="#fff" stroke="#e01818" stroke-width="1.100"/></svg>
<svg style="left:1084px;top:135px" width="18" height="17" viewBox="0 0 18 17"><path d="M11 3.300 C9.500 1.200 5 1.500 5 4 C5 6.500 10.500 6 10.500 8.500 C10.500 10.500 6.500 10.800 4.500 9" stroke="#58b038" stroke-width="2.200" fill="none"/><path d="M8 .5v12" stroke="#58b038" stroke-width="1.400"/><circle cx="10" cy="8.500" r="1.900" fill="#f01818"/><circle cx="15" cy="13.500" r="2.200" fill="#f01818"/><path d="M15.500 6.500 L9.500 15.500" stroke="#f01818" stroke-width="2.400"/><rect x="1.500" y="10" width="5" height="4" fill="#f01818"/><rect x="6" y="12.500" width="5" height="3.500" fill="#d01010"/></svg>
<svg style="left:1147px;top:135px" width="18" height="18" viewBox="0 0 18 18"><circle cx="9.500" cy="9" r="6.600" fill="#f4f8fc" stroke="#8898a8" stroke-width="1.600"/><circle cx="9.500" cy="9" r="5" fill="#fff" stroke="#c0c8d0" stroke-width=".6"/><path d="M6 5 L11 8 L8.500 10.500z" fill="#2868e0"/><path d="M13.500 13.500 L8.500 10.500 L11 8z" fill="#e83020"/><path d="M2 1 L4.500 3.500M14.500 14.500 L17 17" stroke="#8a5a20" stroke-width="2"/><path d="M1.500 2.500 L3.500 .5" stroke="#8a5a20" stroke-width="1.200"/></svg>
<svg style="left:1195px;top:138px" width="13" height="13" viewBox="0 0 13 13"><path d="M2 .8 L6.500 4.500 L11 .8 L12.800 2.600 L9 6.500 L12.800 10.500 L11 12.300 L6.500 8.600 L2 12.300 L.3 10.500 L4 6.500 L.3 2.600z" fill="#f03838" stroke="#c01010" stroke-width=".8"/><path d="M2.200 2 L6.500 5.500 L10.800 2" stroke="#ff9090" stroke-width=".8" fill="none"/></svg>
<svg style="left:855px;top:362px" width="19" height="19" viewBox="0 0 19 19"><circle cx="9" cy="9.500" r="7.500" fill="#2890e8"/><path d="M3 6 C5 3 8 3.500 9 5.500 C10 7.500 7 8.500 6.500 10 C6 12 8 13 7.500 15 C4.500 14.500 1.500 11 3 6z" fill="#60c848"/><path d="M12 11 C13.500 10 15.500 11 15 13 C14 15 12 15.500 11.500 14 z" fill="#60c848"/><circle cx="9" cy="7.500" r="5" fill="#e8f4fc" fill-opacity=".85" stroke="#7888a0" stroke-width="1.400"/><path d="M6 6 C7 4.500 9 4 10.500 4.500" stroke="#fff" stroke-width="1.200" fill="none"/><path d="M12.500 11.500 L17 16.500" stroke="#c86818" stroke-width="2.600"/><path d="M12 11 L13.500 12.500" stroke="#606870" stroke-width="1.800"/></svg>
</div></body></html>
